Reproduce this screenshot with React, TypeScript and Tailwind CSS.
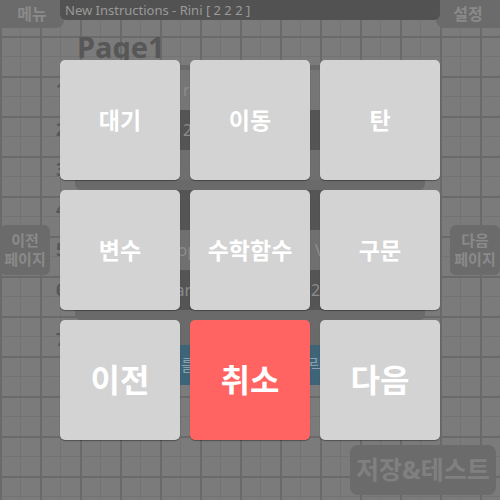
import React from 'react';

const FONT = "font-['Noto_Sans','Noto_Sans_CJK_KR',sans-serif]";

type Key = { label: string; big?: boolean; danger?: boolean };

const KEYS: Key[] = [
  { label: '대기' },
  { label: '이동' },
  { label: '탄' },
  { label: '변수' },
  { label: '수학함수' },
  { label: '구문' },
  { label: '이전', big: true },
  { label: '취소', big: true, danger: true },
  { label: '다음', big: true },
];

function SideButton({ top, bottom }: { top: string; bottom: string }) {
  return (
    <div className="w-[50px] h-[50px] rounded-[6px] bg-[#6b6b6b] flex flex-col items-center justify-center text-[15px] leading-[19px] font-bold text-[#8a8a8a]">
      <span>{top}</span>
      <span>{bottom}</span>
    </div>
  );
}

function Num({ n }: { n: string }) {
  return (
    <div className="h-[40px] flex items-center pl-[6px] text-[17px] font-bold text-[#585858]">{n}</div>
  );
}

export default function App() {
  return (
    <div
      className={`${FONT} relative w-[500px] h-[500px] overflow-hidden bg-[#7b7b7b] [background-image:linear-gradient(to_right,#6a6a6a_2px,transparent_2px),linear-gradient(to_bottom,#6a6a6a_2px,transparent_2px),linear-gradient(to_right,#737373_1px,transparent_1px),linear-gradient(to_bottom,#737373_1px,transparent_1px)] [background-size:40px_40px,40px_40px,20px_20px,20px_20px] [background-position:0_36px,0_36px,0_36px,0_36px]`}
    >
      {/* dimmed editor underneath */}
      <div className="flex flex-col h-full">
        <div className="flex items-start h-[28px]">
          <div className="w-[64px] h-[28px] rounded-br-[8px] bg-[#6b6b6b] flex items-center justify-center text-[16px] font-bold text-[#8a8a8a]">
            메뉴
          </div>
          <div className="relative z-10 -ml-[4px] w-[380px] h-[20px] rounded-b-[6px] bg-[#525252] pl-[5px] text-[13px] leading-[20px] text-[#9a9a9a]">
            New Instructions - Rini [ 2 2 2 ]
          </div>
          <div className="-ml-[4px] w-[64px] h-[28px] rounded-bl-[8px] bg-[#6b6b6b] flex items-center justify-center text-[16px] font-bold text-[#8a8a8a]">
            설정
          </div>
        </div>

        <div className="mt-[4px] pl-[77px] h-[30px] text-[29px] leading-[30px] font-bold text-[#575757]">Page1</div>

        <div className="mt-[3px] flex h-[370px]">
          <div className="w-[50px] flex items-center">
            <SideButton top="이전" bottom="페이지" />
          </div>

          <div className="w-[400px] flex flex-col">
            <div className="flex">
              <div className="w-[25px] pt-[5px]">
                <Num n="1" />
                <Num n="2" />
                <Num n="3" />
              </div>
              <div className="w-[350px] h-[125px] rounded-b-[6px] bg-[#6a6a6a] pt-[5px] flex flex-col text-[16px] text-[#8c8c8c]">
                <div className="h-[40px] bg-[#767676] flex items-center pl-[108px]">r</div>
                <div className="h-[40px] bg-[#555555] flex items-center pl-[108px]">2</div>
                <div className="h-[30px] bg-[#6f6f6f]" />
              </div>
            </div>

            <div className="flex">
              <div className="w-[25px]">
                <Num n="4" />
                <Num n="5" />
                <Num n="6" />
              </div>
              <div className="w-[350px] h-[130px] rounded-b-[6px] bg-[#6a6a6a] flex flex-col text-[16px] text-[#8c8c8c]">
                <div className="h-[40px] bg-[#555555]" />
                <div className="h-[40px] bg-[#707070] flex items-center">
                  <span className="w-[122px] text-right">Loop</span>
                  <span className="ml-[118px]">V</span>
                </div>
                <div className="h-[40px] bg-[#555555] flex items-center">
                  <span className="w-[116px] text-right">Var</span>
                  <span className="ml-[120px]">20</span>
                </div>
              </div>
            </div>

            <div className="flex">
              <div className="w-[25px]">
                <Num n="7" />
              </div>
              <div className="w-[350px] h-[65px] rounded-b-[6px] bg-[#6a6a6a] pt-[25px] flex flex-col text-[16px] text-[#8aa0ad]">
                <div className="h-[40px] rounded-b-[6px] bg-[#3e6478] flex items-center">
                  <span className="ml-[106px]">를</span>
                  <span className="ml-[113px]">릭</span>
                </div>
              </div>
            </div>
          </div>

          <div className="w-[50px] flex items-center">
            <SideButton top="다음" bottom="페이지" />
          </div>
        </div>

        <div className="mt-[10px] ml-[350px] w-[146px] h-[50px] rounded-[8px] bg-[#6b6b6b] flex items-center justify-center text-[25px] font-bold text-[#808080]">
          저장&amp;테스트
        </div>
      </div>

      {/* instruction picker overlay */}
      <div className="absolute inset-0 flex items-center justify-center">
        <div className="grid grid-cols-[repeat(3,120px)] gap-[10px]">
          {KEYS.map((k) => (
            <button
              key={k.label}
              className={`h-[120px] rounded-[5px] flex items-center justify-center font-bold text-white shadow-[0_1px_1px_rgba(0,0,0,0.35)] ${
                k.danger ? 'bg-[#ff6462]' : 'bg-[#d3d3d3]'
              } ${k.big ? 'text-[32px]' : 'text-[23px]'}`}
            >
              {k.label}
            </button>
          ))}
        </div>
      </div>
    </div>
  );
}
